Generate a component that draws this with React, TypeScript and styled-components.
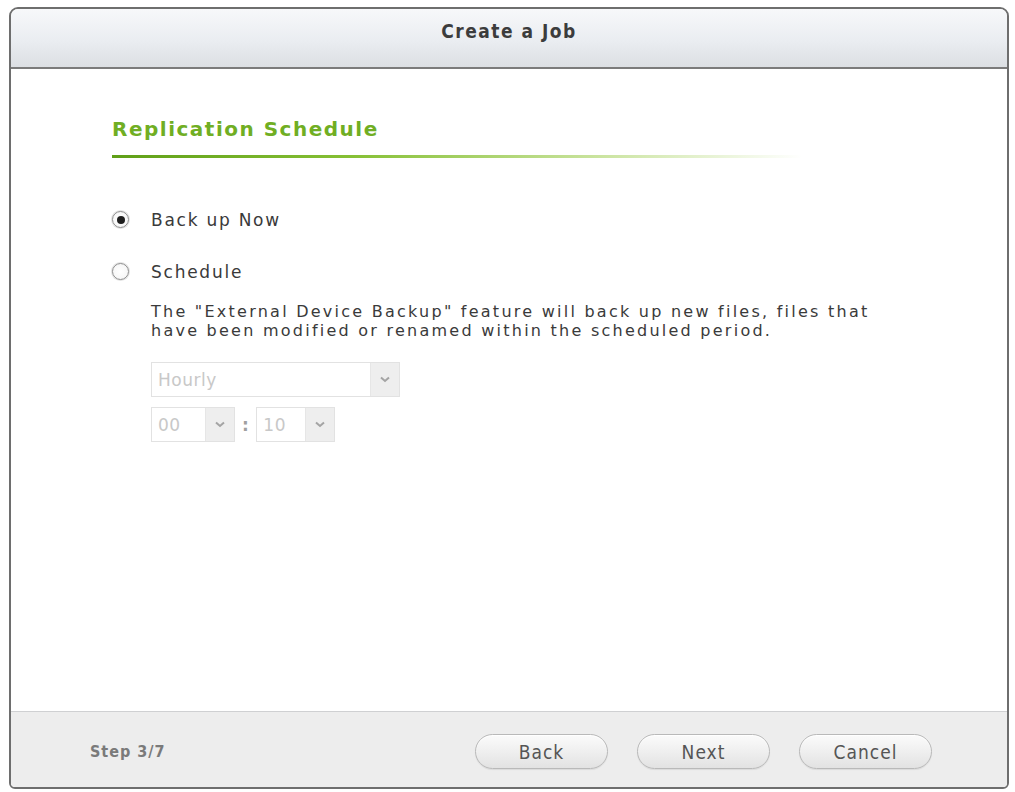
import React from 'react';
import styled, { createGlobalStyle } from 'styled-components';

const GlobalStyle = createGlobalStyle`
  html, body {
    margin: 0;
    padding: 0;
    background: #ffffff;
  }
  body {
    font-family: 'DejaVu Sans', 'Liberation Sans', sans-serif;
  }
`;

const Page = styled.div`
  width: 1015px;
  height: 792px;
  padding: 7px 0 0 9px;
  box-sizing: border-box;
`;

const Window = styled.div`
  width: 1000px;
  height: 782px;
  box-sizing: border-box;
  border: 2px solid #6e6e6e;
  border-radius: 9px 9px 6px 6px;
  display: flex;
  flex-direction: column;
  overflow: hidden;
  background: #ffffff;
`;

const TitleBar = styled.div`
  height: 60px;
  flex: none;
  box-sizing: border-box;
  padding-bottom: 14px;
  display: flex;
  align-items: center;
  justify-content: center;
  background: linear-gradient(to bottom, #f7f8fa 0%, #eaedf1 55%, #dcdfe3 100%);
  border-bottom: 2px solid #7b7b7b;
  font-family: 'DejaVu Sans Condensed', 'DejaVu Sans', sans-serif;
  font-weight: bold;
  font-size: 19px;
  letter-spacing: 1.5px;
  color: #3c3c3c;
`;

const Body = styled.div`
  flex: 1;
  padding: 40px 0 0 101px;
  display: flex;
  flex-direction: column;
`;

const SectionTitle = styled.div`
  font-family: 'DejaVu Sans', sans-serif;
  font-weight: bold;
  font-size: 20px;
  color: #70ae23;
  line-height: 40px;
  letter-spacing: 1.5px;
`;

const SectionRule = styled.div`
  width: 690px;
  height: 3px;
  margin-top: 6px;
  background: linear-gradient(to right, #5f9f17 0%, #86c035 35%, #c9e39d 70%, rgba(255, 255, 255, 0) 100%);
`;

const Options = styled.div`
  margin-top: 51px;
  display: flex;
  flex-direction: column;
  gap: 30px;
`;

const OptionRow = styled.label`
  display: flex;
  align-items: flex-start;
  gap: 22px;
  font-size: 17px;
  letter-spacing: 1.75px;
  color: #3a3a3a;
`;

const Radio = styled.span<{ $checked?: boolean }>`
  width: 17px;
  height: 17px;
  flex: none;
  margin: 2px 0 0 0;
  box-sizing: border-box;
  border: 1.5px solid #8d8d8d;
  border-radius: 50%;
  background: radial-gradient(circle, #ffffff 0%, #f3f3f3 100%);
  box-shadow: 0 0 0 1px #e3e3e3;
  display: flex;
  align-items: center;
  justify-content: center;

  &::after {
    content: '';
    width: 8px;
    height: 8px;
    border-radius: 50%;
    background: #1e1e1e;
    display: ${(p) => (p.$checked ? 'block' : 'none')};
  }
`;

const OptionText = styled.div`
  display: flex;
  flex-direction: column;
`;

const Label = styled.div`
  line-height: 22px;
`;

const Description = styled.div`
  margin-top: 19px;
  font-size: 16px;
  line-height: 19px;
  letter-spacing: 2.25px;
`;

const Controls = styled.div`
  margin-top: 22px;
  display: flex;
  flex-direction: column;
  gap: 10px;
  letter-spacing: 0.5px;
`;

const TimeRow = styled.div`
  display: flex;
  align-items: center;
  gap: 6px;
`;

const Select = styled.div<{ $width: number }>`
  width: ${(p) => p.$width}px;
  height: 35px;
  box-sizing: border-box;
  border: 1px solid #e2e2e2;
  display: flex;
  background: #ffffff;
`;

const SelectValue = styled.div`
  flex: 1;
  padding-left: 6px;
  display: flex;
  align-items: center;
  font-size: 17px;
  color: #c8c8c8;
`;

const SelectArrow = styled.div`
  width: 28px;
  flex: none;
  display: flex;
  align-items: center;
  justify-content: center;
  background: #eeeeee;
  border-left: 1px solid #e6e6e6;
`;

const Colon = styled.span`
  font-size: 17px;
  font-weight: bold;
  color: #a0a0a0;
  padding: 0 1px;
`;

const Footer = styled.div`
  height: 76px;
  flex: none;
  box-sizing: border-box;
  border-top: 1px solid #cfd0d2;
  background: #ededed;
  display: flex;
  align-items: center;
  padding: 4px 0 0 79px;
`;

const StepText = styled.div`
  font-family: 'DejaVu Sans Condensed', 'DejaVu Sans', sans-serif;
  font-weight: bold;
  font-size: 16px;
  letter-spacing: 1px;
  color: #7a7a7a;
  flex: 1;
`;

const Buttons = styled.div`
  display: flex;
  gap: 29px;
  margin-right: 75px;
`;

const Button = styled.button`
  width: 133px;
  height: 35px;
  border: 1px solid #b9b9b9;
  border-radius: 18px;
  background: linear-gradient(to bottom, #fbfbfb 0%, #efefef 50%, #e2e2e2 100%);
  box-shadow: inset 0 1px 0 #ffffff, 0 1px 1px rgba(0, 0, 0, 0.08);
  font-family: 'DejaVu Sans Condensed', 'DejaVu Sans', sans-serif;
  font-size: 19px;
  letter-spacing: 1px;
  color: #555555;
  padding: 0;
`;

const Chevron: React.FC = () => (
  <svg width="10" height="7" viewBox="0 0 10 7">
    <path d="M1 1.5 L5 5 L9 1.5" fill="none" stroke="#a4a4a4" strokeWidth="2" />
  </svg>
);

const DropDown: React.FC<{ value: string; width: number }> = ({ value, width }) => (
  <Select $width={width}>
    <SelectValue>{value}</SelectValue>
    <SelectArrow>
      <Chevron />
    </SelectArrow>
  </Select>
);

export default function App() {
  return (
    <Page>
      <GlobalStyle />
      <Window>
        <TitleBar>Create a Job</TitleBar>
        <Body>
          <SectionTitle>Replication Schedule</SectionTitle>
          <SectionRule />
          <Options>
            <OptionRow>
              <Radio $checked />
              <Label>Back up Now</Label>
            </OptionRow>
            <OptionRow>
              <Radio />
              <OptionText>
                <Label>Schedule</Label>
                <Description>
                  The "External Device Backup" feature will back up new files, files that
                  <br />
                  have been modified or renamed within the scheduled period.
                </Description>
                <Controls>
                  <DropDown value="Hourly" width={249} />
                  <TimeRow>
                    <DropDown value="00" width={84} />
                    <Colon>:</Colon>
                    <DropDown value="10" width={79} />
                  </TimeRow>
                </Controls>
              </OptionText>
            </OptionRow>
          </Options>
        </Body>
        <Footer>
          <StepText>Step 3/7</StepText>
          <Buttons>
            <Button>Back</Button>
            <Button>Next</Button>
            <Button>Cancel</Button>
          </Buttons>
        </Footer>
      </Window>
    </Page>
  );
}
